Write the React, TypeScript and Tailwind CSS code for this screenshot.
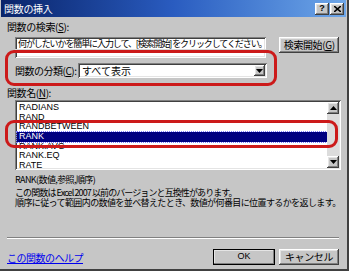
const jp = "font-['MS_UI_Gothic','Noto_Sans_CJK_JP',sans-serif]";
const raised =
  "shadow-[inset_-1px_-1px_#404040,inset_1px_1px_#ffffff,inset_-2px_-2px_#808080,inset_2px_2px_#e4e4e4]";
const sunken =
  "shadow-[inset_1px_1px_#808080,inset_-1px_-1px_#ffffff,inset_2px_2px_#404040,inset_-2px_-2px_#e4e4e4]";

const functions = ["RADIANS", "RAND", "RANDBETWEEN", "RANK", "RANK.AVG", "RANK.EQ", "RATE"];

function Arrow({ up }: { up?: boolean }) {
  return (
    <svg width="7" height="4" viewBox="0 0 7 4">
      <path d={up ? "M3.5 0L7 4H0z" : "M0 0h7L3.5 4z"} fill="#000" />
    </svg>
  );
}

export default function App() {
  return (
    <div className={`relative w-[349px] h-[271px] bg-[#c6c6c6] border-r-2 border-b-2 border-r-[#404040] border-b-[#404040] flex flex-col overflow-hidden ${jp} text-black`}>
      {/* title bar */}
      <div className="h-[17px] ml-[1px] mr-[1px] flex items-center justify-between bg-gradient-to-r from-[#0a246a] via-[#2a5cc0] to-[#6ea6e8] pl-[3px] pr-[2px]">
        <span className="text-white text-[10px] leading-none tracking-[-0.3px]">関数の挿入</span>
        <div className="flex gap-[1px]">
          <div className={`w-[14px] h-[12px] bg-[#c6c6c6] ${raised} flex items-center justify-center text-[9px] font-bold leading-none font-['Liberation_Sans',sans-serif]`}>?</div>
          <div className={`w-[14px] h-[12px] bg-[#c6c6c6] ${raised} flex items-center justify-center`}>
            <svg width="7" height="6" viewBox="0 0 7 6">
              <path d="M0 0l7 6M7 0L0 6" stroke="#000" strokeWidth="1.6" />
            </svg>
          </div>
        </div>
      </div>

      <div className="flex flex-col pl-[7px] pr-[8px]">
        <div className="mt-[4px] h-[12px] text-[10px] leading-[12px] tracking-[-0.4px]">
          関数の検索(<span className="underline">S</span>):
        </div>

        {/* search row */}
        <div className="mt-[4px] flex items-start pl-[8px]">
          <div className={`w-[253px] h-[21px] bg-white ${sunken} flex flex-col`}>
            <div className="h-[13px] pl-[3px] pt-[2px] text-[9px] leading-[10px] tracking-[-1.1px] whitespace-nowrap overflow-hidden border-b border-[#d8d8d8]">
              何がしたいかを簡単に入力して、[検索開始] をクリックしてください。
            </div>
          </div>
          <button className={`ml-[13px] w-[60px] h-[16px] bg-[#c6c6c6] ${raised} text-[10px] leading-none tracking-[-0.4px]`}>
            検索開始(<span className="underline">G</span>)
          </button>
        </div>

        {/* category row */}
        <div className="mt-[5px] flex items-center pl-[8px] h-[15px]">
          <span className="w-[63px] text-[10px] leading-none tracking-[-0.5px] whitespace-nowrap">
            関数の分類(<span className="underline">C</span>):
          </span>
          <div className={`w-[189px] h-[15px] bg-white ${sunken} flex items-center justify-between pl-[4px] pr-[2px]`}>
            <span className="text-[10px] leading-none">すべて表示</span>
            <div className={`w-[11px] h-[11px] bg-[#c6c6c6] ${raised} flex items-center justify-center`}>
              <Arrow />
            </div>
          </div>
        </div>

        <div className="mt-[9px] h-[12px] text-[10px] leading-[12px] tracking-[-0.4px]">
          関数名(<span className="underline">N</span>):
        </div>

        {/* list */}
        <div className={`mt-[1px] ml-[8px] w-[326px] h-[70px] bg-white ${sunken} flex p-[2px]`}>
          <div className="flex-1 flex flex-col pt-[1px] font-['Liberation_Sans',sans-serif] text-[9px] leading-[9.7px]">
            {functions.map((f) => (
              <div
                key={f}
                className={`pl-[2px] h-[9.7px] ${f === "RANK" ? "bg-[#000080] text-white outline outline-1 outline-dotted outline-[#8080ff]" : ""}`}
              >
                {f}
              </div>
            ))}
          </div>
          <div className="w-[12px] h-full bg-[#dcdcdc] flex flex-col justify-between">
            <div className={`h-[12px] bg-[#c6c6c6] ${raised} flex items-center justify-center`}>
              <Arrow up />
            </div>
            <div className={`h-[12px] bg-[#c6c6c6] ${raised} flex items-center justify-center`}>
              <Arrow />
            </div>
          </div>
        </div>

        {/* description */}
        <div className="mt-[5px] pl-[8px] text-[9px] leading-[10.5px] tracking-[-0.6px] whitespace-nowrap">
          <div>RANK(数値,参照,順序)</div>
          <div className="mt-[2px] tracking-[-0.9px]">この関数は Excel 2007 以前のバージョンと互換性があります。</div>
          <div>順序に従って範囲内の数値を並べ替えたとき、数値が何番目に位置するかを返します。</div>
        </div>

        <div className="mt-[28px] h-[2px] border-t border-b border-t-[#808080] border-b-white" />

        {/* bottom row */}
        <div className="mt-[10px] flex items-start">
          <a className="mt-[4px] text-[10px] leading-none text-[#0000ee] underline tracking-[-0.5px]">この関数のヘルプ</a>
          <button className={`ml-auto w-[62px] h-[16px] bg-[#c6c6c6] ${raised} outline outline-1 outline-black -outline-offset-1 text-[9px] leading-none font-['Liberation_Sans',sans-serif]`}>
            OK
          </button>
          <button className={`ml-[4px] w-[60px] h-[16px] bg-[#c6c6c6] ${raised} text-[10px] leading-none tracking-[-0.4px]`}>
            キャンセル
          </button>
        </div>
      </div>

      {/* red annotation frames */}
      <div className="absolute left-[5px] top-[50px] w-[272px] h-[36px] border-[3px] border-[#cc1a1a] rounded-[9px]" />
      <div className="absolute left-[5px] top-[120px] w-[333px] h-[28px] border-[3px] border-[#cc1a1a] rounded-[9px]" />
    </div>
  );
}
